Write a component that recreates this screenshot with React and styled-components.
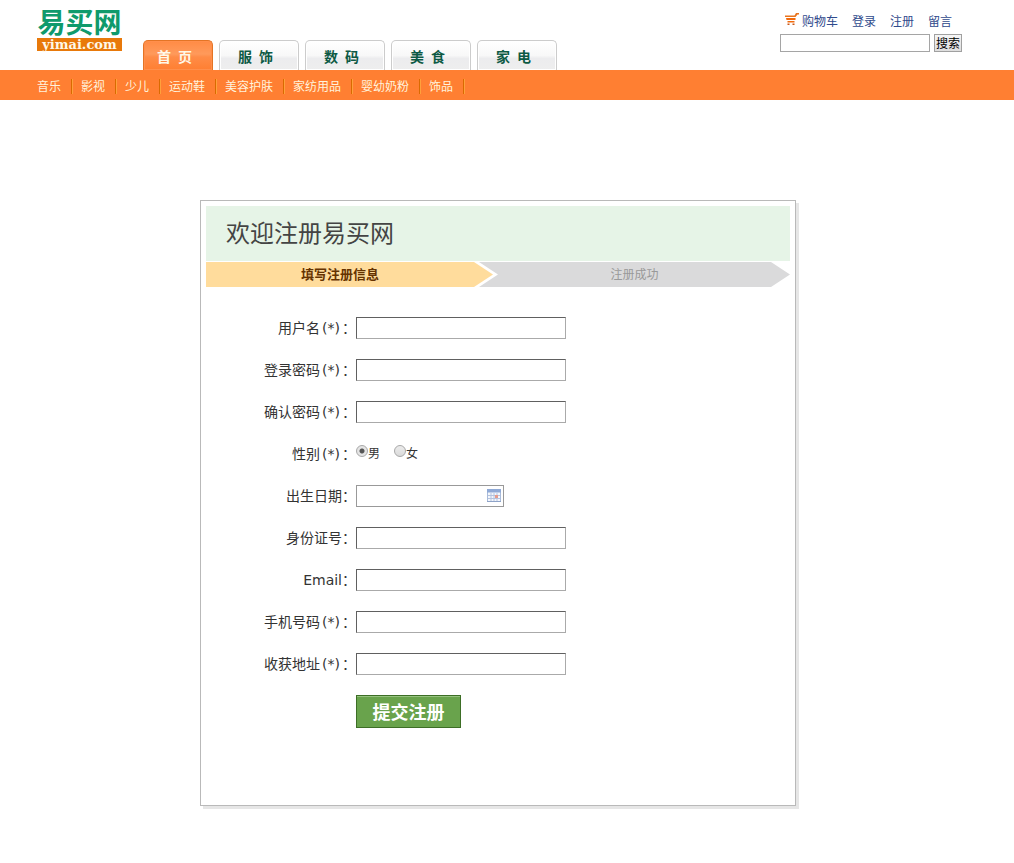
import React from "react";
import styled, { createGlobalStyle } from "styled-components";

const GlobalStyle = createGlobalStyle`
  * { box-sizing: border-box; }
  body {
    margin: 0;
    background: #fff;
    color: #333;
    font: 12px/18px "DejaVu Sans", "Noto Sans CJK SC", sans-serif;
  }
  ul { list-style: none; margin: 0; padding: 0; }
  a { color: inherit; text-decoration: none; }
`;

const Wrap = styled.div`
  max-width: 940px;
  margin: 0 auto;
`;

const HeaderRow = styled(Wrap)`
  display: flex;
  align-items: flex-start;
  height: 70px;
`;

const Logo = styled.a`
  width: 85px;
  margin: 8px 21px 0 0;
  text-align: center;
`;

const LogoName = styled.span`
  display: block;
  margin-bottom: 4px;
  color: #0f9a6c;
  font: bold 28px/26px "Noto Sans CJK SC", sans-serif;
`;

const LogoDomain = styled.span`
  display: block;
  background: #e8790a;
  color: #fff8e8;
  font: bold 13px/13px "DejaVu Serif", serif;
`;

const Tabs = styled.ul`
  display: flex;
  align-self: flex-end;
  gap: 6px;
`;

const Tab = styled.a`
  display: block;
  width: ${(p) => (p.$active ? 70 : 80)}px;
  height: 30px;
  border: 1px solid ${(p) => (p.$active ? "#e47425" : "#ccc")};
  border-bottom: 0;
  border-radius: 5px 5px 0 0;
  background: ${(p) =>
    p.$active
      ? "linear-gradient(#ff8b45, #ff9a5b 45%, #ff8c47 55%, #ff7f32)"
      : "linear-gradient(#fff, #f8f8f8 50%, #ececee 60%, #eee)"};
  box-shadow: inset 0 0 0 1px ${(p) => (p.$active ? "#ff8f4c" : "#fff")};
  color: ${(p) => (p.$active ? "#fff8e8" : "#0d5a44")};
  font: bold 14px/31px "Noto Sans CJK SC", sans-serif;
  letter-spacing: 7px;
  text-align: center;
`;

const Tools = styled.div`
  margin: 13px 15px 0 auto;
`;

const ToolLinks = styled.nav`
  display: flex;
  gap: 14px;
  margin: 0 0 3px 5px;
  color: #2f4a8c;
`;

const CartLink = styled.a`
  display: flex;
  gap: 3px;
`;

const Search = styled.form`
  display: flex;
  gap: 4px;
`;

const SearchBox = styled.input`
  width: 150px;
  height: 18px;
  padding: 0 2px;
  border: 1px solid #a5a5a5;
  background: #fff;
  font: inherit;
`;

const SearchButton = styled.button`
  width: 28px;
  height: 18px;
  padding: 0;
  border: 1px solid #a0a0a0;
  background: linear-gradient(#f6f6f6, #dedede);
  color: #000;
  font: inherit;
  line-height: 18px;
  white-space: nowrap;
`;

const SubNav = styled.nav`
  background: #ff7f32;
`;

const SubList = styled.ul`
  display: flex;
  align-items: center;
  gap: 8px;
  height: 30px;
  padding-top: 2px;
`;

const SubItem = styled.li`
  padding: 2px 10px 0 0;
  border-right: 1px solid #d96a00;
  box-shadow: 1px 0 0 #ffa03c;
  margin-right: 1px;
  color: #fff3dc;
  line-height: 13px;
`;

const Main = styled(Wrap)`
  padding: 100px 0 57px 163px;
`;

const Card = styled.main`
  max-width: 596px;
  min-height: 606px;
  padding: 5px;
  border: 1px solid #b9b9b9;
  box-shadow: 3px 3px 0 #e6e6e6;
`;

const Title = styled.h1`
  margin: 0 0 1px;
  padding: 0 20px 3px;
  background: #e6f4e7;
  color: #444;
  font: 400 24px/52px "Noto Sans CJK SC", sans-serif;
`;

const Steps = styled.ol`
  display: flex;
  margin: 0;
  padding: 0;
  list-style: none;
  line-height: 25px;
  text-align: center;
`;

const CurrentStep = styled.li`
  flex: 0 0 287px;
  padding-right: 19px;
  background: #ffdc9c;
  color: #630;
  font-size: 13px;
  font-weight: bold;
  clip-path: polygon(0 0, calc(100% - 19px) 0, 100% 50%, calc(100% - 19px) 100%, 0 100%);
`;

const NextStep = styled.li`
  flex: 1;
  margin-left: -14px;
  padding: 2px 19px 0;
  line-height: 23px;
  background: #dadadb;
  color: #999;
  clip-path: polygon(0 0, calc(100% - 19px) 0, 100% 50%, calc(100% - 19px) 100%, 0 100%, 19px 50%);
`;

const Form = styled.form`
  display: flex;
  flex-direction: column;
  gap: 20px;
  padding: 30px 0;
`;

const Row = styled.div`
  display: grid;
  grid-template-columns: 150px 1fr;
  align-items: center;
  min-height: 22px;
`;

const Label = styled.label`
  font-size: 14px;
  line-height: 22px;
  text-align: right;
`;

const Required = styled.span`
  padding: 0 2px;
`;

const TextField = styled.input`
  width: 210px;
  height: 22px;
  padding: 0 4px;
  border: 1px solid;
  border-color: #606060 #aaa #aaa #606060;
  background: #fff;
  font: inherit;
`;

const DateBox = styled.div`
  display: flex;
  align-items: center;
  width: 148px;
  height: 22px;
  border: 1px solid #999;
`;

const DateInput = styled.input`
  flex: 1;
  min-width: 0;
  height: 20px;
  padding: 0 4px;
  border: 0;
  background: transparent;
  font: inherit;
`;

const DateButton = styled.button`
  display: flex;
  padding: 0 2px;
  border: 0;
  background: none;
`;

const Choices = styled.div`
  display: flex;
  gap: 14px;
`;

const Choice = styled.label`
  display: flex;
  align-items: flex-start;
  line-height: 22px;
`;

const Radio = styled.input`
  appearance: none;
  width: 12px;
  height: 12px;
  margin: 2px 0 0;
  border: 1px solid #a8a8a8;
  border-radius: 50%;
  background: linear-gradient(#ececec, #dadada);
  &:checked {
    background: radial-gradient(circle, #555 0 2px, #e4e4e4 3px);
  }
`;

const Submit = styled.button`
  grid-column: 2;
  justify-self: start;
  width: 105px;
  height: 33px;
  padding: 0;
  border: 1px solid #3d6e26;
  background: #69a34c;
  box-shadow: inset 0 1px 0 #96c27f;
  color: #fff;
  font: bold 18px/31px "Noto Sans CJK SC", sans-serif;
`;

const CartIcon = () => (
  <svg width="14" height="14" viewBox="0 0 14 14" aria-hidden="true">
    <path d="M14 0h-3L9.500 2.500H0V4h10.500L12.500 1.500H14z" fill="#e8741e" />
    <path d="M1 5h9.500v2H1.500zM2.500 8h7v1.500h-7z" fill="#f26a0c" />
    <path d="M2.500 10.500h2v1.500h-2zM7.500 10.500h2v1.500h-2z" fill="#c9581a" />
  </svg>
);

const CalendarIcon = () => (
  <svg width="14" height="14" viewBox="0 0 14 14" aria-hidden="true">
    <rect x=".5" y=".5" width="13" height="12" fill="#f4f7fc" stroke="#a9bbda" />
    <path d="M0 0h14v3.500H0z" fill="#8fa9d6" />
    <path d="M1 6.500h12M1 9.500h12M4 4v8.500M7 4v8.500M10 4v8.500" stroke="#b4c3df" />
    <path d="M8 6h3v3H8z" fill="#e59a8c" />
    <path d="M0 12.500h14" stroke="#8ea3c8" />
  </svg>
);

const tabs = ["首页", "服饰", "数码", "美食", "家电"];
const categories = ["音乐", "影视", "少儿", "运动鞋", "美容护肤", "家纺用品", "婴幼奶粉", "饰品"];

const FieldLabel = ({ text, required, ...rest }) => (
  <Label {...rest}>
    {text}
    {required && <Required>(*)</Required>}：
  </Label>
);

const Field = ({ id, text, required, type = "text" }) => (
  <Row>
    <FieldLabel htmlFor={id} text={text} required={required} />
    <TextField id={id} name={id} type={type} />
  </Row>
);

export default function App() {
  return (
    <>
      <GlobalStyle />
      <header>
        <HeaderRow>
          <Logo href="#home">
            <LogoName>易买网</LogoName>
            <LogoDomain>yimai.com</LogoDomain>
          </Logo>
          <Tabs>
            {tabs.map((t, i) => (
              <li key={t}>
                <Tab href="#tab" $active={i === 0}>{t}</Tab>
              </li>
            ))}
          </Tabs>
          <Tools>
            <ToolLinks>
              <CartLink href="#cart"><CartIcon />购物车</CartLink>
              <a href="#login">登录</a>
              <a href="#register">注册</a>
              <a href="#guestbook">留言</a>
            </ToolLinks>
            <Search onSubmit={(e) => e.preventDefault()}>
              <SearchBox type="text" name="q" aria-label="搜索" />
              <SearchButton>搜索</SearchButton>
            </Search>
          </Tools>
        </HeaderRow>
        <SubNav>
          <Wrap>
            <SubList>
              {categories.map((c) => (
                <SubItem key={c}><a href="#category">{c}</a></SubItem>
              ))}
            </SubList>
          </Wrap>
        </SubNav>
      </header>
      <Main as="div">
        <Card>
          <Title>欢迎注册易买网</Title>
          <Steps>
            <CurrentStep>填写注册信息</CurrentStep>
            <NextStep>注册成功</NextStep>
          </Steps>
          <Form onSubmit={(e) => e.preventDefault()}>
            <Field id="userName" text="用户名" required />
            <Field id="password" text="登录密码" required type="password" />
            <Field id="confirm" text="确认密码" required type="password" />
            <Row role="radiogroup" aria-labelledby="sexLabel">
              <FieldLabel as="span" id="sexLabel" text="性别" required />
              <Choices>
                <Choice><Radio type="radio" name="sex" value="1" defaultChecked />男</Choice>
                <Choice><Radio type="radio" name="sex" value="2" />女</Choice>
              </Choices>
            </Row>
            <Row>
              <FieldLabel htmlFor="birthday" text="出生日期" />
              <DateBox>
                <DateInput id="birthday" name="birthday" type="text" />
                <DateButton type="button" aria-label="日期"><CalendarIcon /></DateButton>
              </DateBox>
            </Row>
            <Field id="identity" text="身份证号" />
            <Field id="email" text="Email" type="email" />
            <Field id="mobile" text="手机号码" required />
            <Field id="address" text="收获地址" required />
            <Row>
              <Submit>提交注册</Submit>
            </Row>
          </Form>
        </Card>
      </Main>
    </>
  );
}
